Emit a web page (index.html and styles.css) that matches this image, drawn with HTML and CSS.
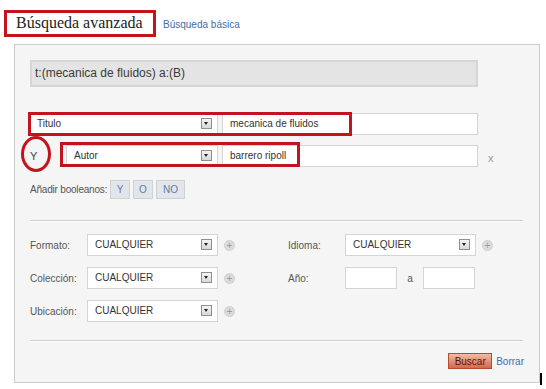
FILE: index.html
```html
<!DOCTYPE html>
<html>
<head>
    <title>Búsqueda avanzada</title>
    <link rel="stylesheet" href="styles.css">
</head>
<body>
<div class="page">
    <div class="head">
        <h1 class="title">Búsqueda avanzada</h1>
        <a class="link basic" href="#">Búsqueda básica</a>
    </div>

    <div class="panel">
        <div class="query">t:(mecanica de fluidos) a:(B)</div>

        <div class="term first">
            <div class="select field">Titulo<span class="arrow"></span></div>
            <div class="input text">mecanica de fluidos</div>
            <span class="mark mark-title"></span>
        </div>

        <div class="term second">
            <span class="op">Y</span>
            <div class="select field short">Autor<span class="arrow"></span></div>
            <div class="input text">barrero ripoll</div>
            <span class="remove">x</span>
            <span class="mark mark-author"></span>
            <span class="mark ring"></span>
        </div>

        <div class="bools">
            <span class="bools-label">Añadir booleanos:</span>
            <button class="bool">Y</button>
            <button class="bool">O</button>
            <button class="bool wide">NO</button>
        </div>

        <div class="sep"></div>

        <div class="filters">
            <div class="filter">
                <span class="label">Formato:</span>
                <div class="select small">CUALQUIER<span class="arrow"></span></div>
                <span class="plus">+</span>
            </div>
            <div class="filter">
                <span class="label">Idioma:</span>
                <div class="select small">CUALQUIER<span class="arrow"></span></div>
                <span class="plus">+</span>
            </div>
            <div class="filter">
                <span class="label">Colección:</span>
                <div class="select small">CUALQUIER<span class="arrow"></span></div>
                <span class="plus">+</span>
            </div>
            <div class="filter">
                <span class="label">Año:</span>
                <div class="input year"></div>
                <span class="to">a</span>
                <div class="input year"></div>
            </div>
            <div class="filter">
                <span class="label">Ubicación:</span>
                <div class="select small">CUALQUIER<span class="arrow"></span></div>
                <span class="plus">+</span>
            </div>
        </div>

        <div class="sep bottom"></div>

        <div class="actions">
            <button class="search">Buscar</button>
            <a class="link" href="#">Borrar</a>
        </div>
    </div>

    <span class="cursor"></span>
</div>
</body>
</html>
```

FILE: styles.css
```css
body {
    margin: 0;
    background-color: #ffffff;
    font-family: "Liberation Sans", Arial, sans-serif;
    font-size: 10px;
    color: #333333;
}

.page {
    position: relative;
    width: 546px;
    height: 389px;
}

.head {
    display: flex;
    align-items: center;
    padding: 10px 0 0 4px;
}

.title {
    margin: 0;
    width: 152px;
    height: 27px;
    box-sizing: border-box;
    padding: 0 0 0 9px;
    border: 3px solid #c4121f;
    font-family: "Liberation Serif", "Times New Roman", serif;
    font-size: 16px;
    font-weight: normal;
    line-height: 20px;
    white-space: nowrap;
    color: #222222;
}

.link {
    color: #3d6ea6;
    text-decoration: none;
    font-size: 10px;
}

.basic {
    margin-left: 7px;
    margin-top: 1px;
}

.panel {
    margin: 7px 0 0 14px;
    width: 526px;
    height: 339px;
    box-sizing: border-box;
    padding: 15px 15px 0 15px;
    background-color: #f5f5f5;
    border: 1px solid #cccccc;
}

.query {
    width: 448px;
    height: 27px;
    box-sizing: border-box;
    padding-left: 3px;
    background-color: #e4e4e4;
    border: 2px solid #d6d6d6;
    font-size: 12px;
    line-height: 23px;
    color: #3a3a3a;
}

.term {
    position: relative;
    display: flex;
    align-items: center;
    height: 22px;
}

.term.first {
    margin-top: 26px;
}

.term.second {
    margin-top: 10px;
}

.select,
.input {
    position: relative;
    height: 22px;
    box-sizing: border-box;
    background-color: #ffffff;
    border: 1px solid #d4d4d4;
    line-height: 20px;
    color: #333333;
}

.select {
    padding-left: 7px;
}

.select .arrow {
    position: absolute;
    right: 5px;
    top: 4px;
    width: 11px;
    height: 11px;
    box-sizing: border-box;
    border: 1px solid #8f8f8f;
    background: linear-gradient(#f4f4f4, #d8d8d8);
}

.select .arrow::after {
    content: "";
    position: absolute;
    left: 2px;
    top: 3px;
    border-left: 2.5px solid transparent;
    border-right: 2.5px solid transparent;
    border-top: 3px solid #222222;
}

.field {
    margin-left: -1px;
    width: 189px;
}

.field.short {
    margin-left: 0;
    width: 152px;
}

.text {
    margin-left: 4px;
    width: 256px;
    padding-left: 7px;
}

.op {
    width: 36px;
    font-size: 11px;
    color: #444444;
}

.remove {
    margin-left: 10px;
    margin-top: 3px;
    font-size: 11px;
    color: #9a9a9a;
}

.mark {
    position: absolute;
    box-sizing: border-box;
    border: 3px solid #c4121f;
}

.mark-title {
    left: -2px;
    top: -1px;
    width: 324px;
    height: 24px;
}

.mark-author {
    left: 30px;
    top: -3px;
    width: 240px;
    height: 25px;
}

.ring {
    left: -9px;
    top: -9px;
    width: 30px;
    height: 36px;
    border-radius: 50%;
}

.bools {
    display: flex;
    align-items: center;
    gap: 3px;
    margin-top: 13px;
    height: 19px;
}

.bools-label {
    width: 77px;
    white-space: nowrap;
    letter-spacing: -0.2px;
    color: #555555;
}

.bool {
    width: 20px;
    height: 19px;
    padding: 0;
    background-color: #e2e6eb;
    border: 1px solid #cdd1d6;
    font-family: "Liberation Sans", Arial, sans-serif;
    font-size: 10px;
    color: #5b7ba6;
}

.bool.wide {
    width: 29px;
}

.sep {
    margin-top: 21px;
    width: 493px;
    height: 1px;
    background-color: #cfcfcf;
    border-bottom: 1px solid #ffffff;
}

.sep.bottom {
    margin-top: 18px;
}

.filters {
    display: grid;
    grid-template-columns: 258px 1fr;
    row-gap: 11px;
    margin-top: 12px;
}

.filter {
    display: flex;
    align-items: center;
    height: 22px;
}

.label {
    width: 57px;
    color: #555555;
}

.small {
    width: 131px;
}

.plus {
    margin-left: 6px;
    width: 11px;
    height: 11px;
    border-radius: 50%;
    background-color: #dcdcdc;
    border: 1px solid #d0d0d0;
    box-sizing: border-box;
    color: #9a9a9a;
    font-size: 10px;
    line-height: 9px;
    text-align: center;
}

.year {
    width: 52px;
}

.to {
    width: 26px;
    text-align: center;
    color: #555555;
}

.actions {
    display: flex;
    justify-content: flex-end;
    align-items: center;
    gap: 4px;
    margin-top: 11px;
    width: 494px;
}

.search {
    height: 16px;
    width: 44px;
    padding: 0;
    background: linear-gradient(#f2bba8, #d4674c);
    border: 1px solid #b34a33;
    font-family: "Liberation Sans", Arial, sans-serif;
    font-size: 10px;
    color: #5c1409;
}

.cursor {
    position: absolute;
    left: 540px;
    top: 373px;
    width: 2px;
    height: 12px;
    background-color: #000000;
}
```
